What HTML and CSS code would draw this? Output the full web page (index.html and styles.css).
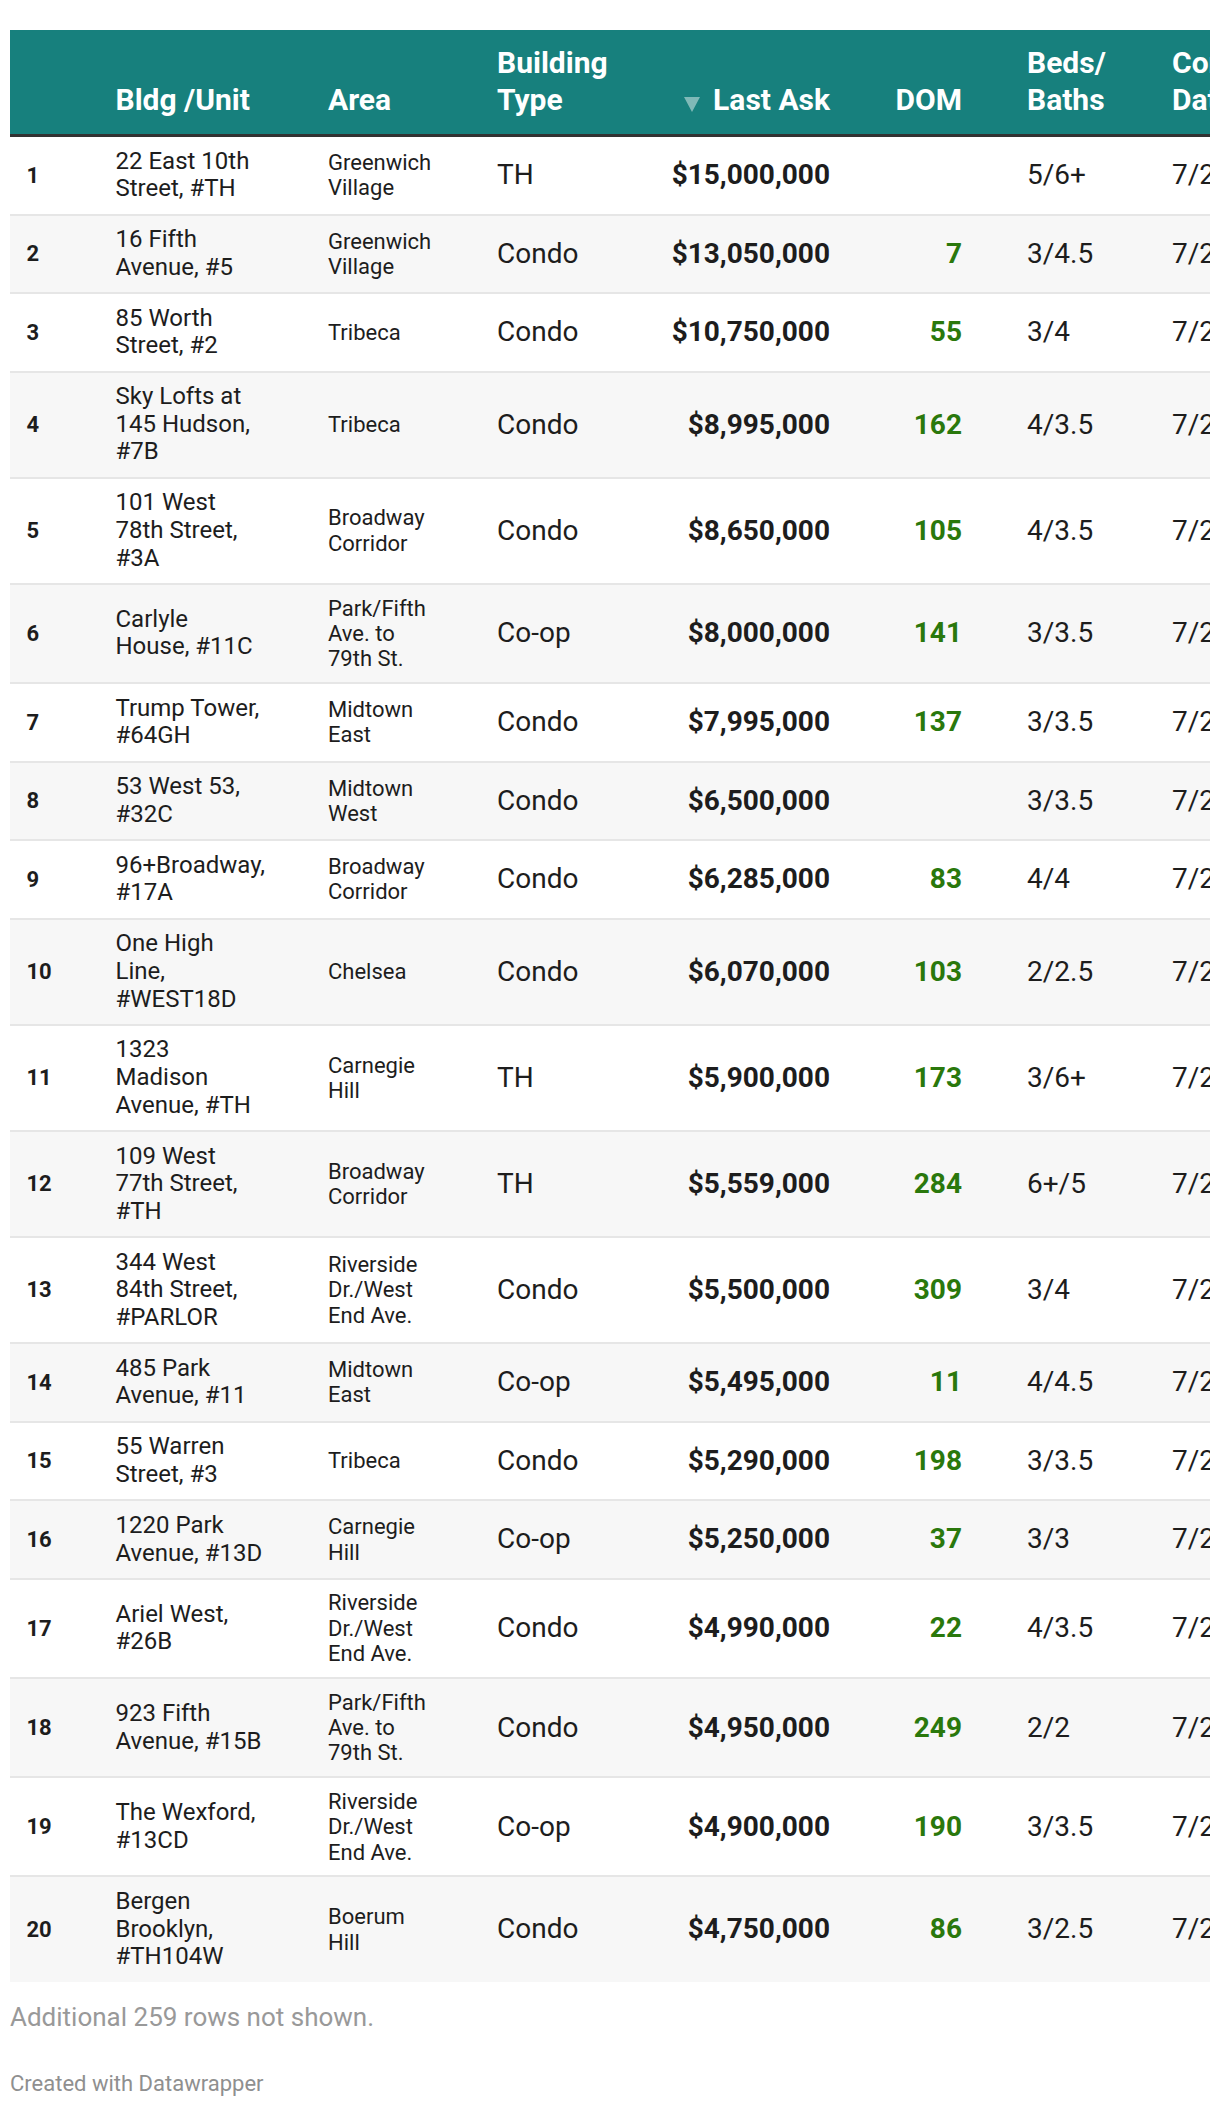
FILE: index.html
```html
<!DOCTYPE html>
<html lang="en">
<head>
<meta charset="utf-8">
<title>Listings</title>
<link rel="stylesheet" href="styles.css">
</head>
<body>
<div class="chart">
  <div class="table-scroll">
    <table class="data">
      <thead>
        <tr>
          <th class="c-rank"></th>
          <th class="c-bldg">Bldg /Unit</th>
          <th class="c-area">Area</th>
          <th class="c-type">Building Type</th>
          <th class="c-ask num"><span class="sort"><svg width="16" height="15" viewBox="0 0 16 15"><polygon points="0,0 16,0 8,15"/></svg></span>Last Ask</th>
          <th class="c-dom num">DOM</th>
          <th class="c-beds">Beds/ Baths</th>
          <th class="c-date">Contract Date</th>
        </tr>
      </thead>
      <tbody>
        <tr><td class="rank">1</td><td class="bldg">22 East 10th Street, #TH</td><td class="area">Greenwich Village</td><td class="type">TH</td><td class="ask">$15,000,000</td><td class="dom"></td><td class="beds">5/6+</td><td class="date">7/25/2023</td></tr>
        <tr><td class="rank">2</td><td class="bldg">16 Fifth Avenue, #5</td><td class="area">Greenwich Village</td><td class="type">Condo</td><td class="ask">$13,050,000</td><td class="dom">7</td><td class="beds">3/4.5</td><td class="date">7/24/2023</td></tr>
        <tr><td class="rank">3</td><td class="bldg">85 Worth Street, #2</td><td class="area">Tribeca</td><td class="type">Condo</td><td class="ask">$10,750,000</td><td class="dom">55</td><td class="beds">3/4</td><td class="date">7/24/2023</td></tr>
        <tr><td class="rank">4</td><td class="bldg">Sky Lofts at 145 Hudson, #7B</td><td class="area">Tribeca</td><td class="type">Condo</td><td class="ask">$8,995,000</td><td class="dom">162</td><td class="beds">4/3.5</td><td class="date">7/25/2023</td></tr>
        <tr><td class="rank">5</td><td class="bldg">101 West 78th Street, #3A</td><td class="area">Broadway Corridor</td><td class="type">Condo</td><td class="ask">$8,650,000</td><td class="dom">105</td><td class="beds">4/3.5</td><td class="date">7/24/2023</td></tr>
        <tr><td class="rank">6</td><td class="bldg">Carlyle House, #11C</td><td class="area">Park/Fifth Ave. to 79th St.</td><td class="type">Co-op</td><td class="ask">$8,000,000</td><td class="dom">141</td><td class="beds">3/3.5</td><td class="date">7/26/2023</td></tr>
        <tr><td class="rank">7</td><td class="bldg">Trump Tower, #64GH</td><td class="area">Midtown East</td><td class="type">Condo</td><td class="ask">$7,995,000</td><td class="dom">137</td><td class="beds">3/3.5</td><td class="date">7/24/2023</td></tr>
        <tr><td class="rank">8</td><td class="bldg">53 West 53, #32C</td><td class="area">Midtown West</td><td class="type">Condo</td><td class="ask">$6,500,000</td><td class="dom"></td><td class="beds">3/3.5</td><td class="date">7/27/2023</td></tr>
        <tr><td class="rank">9</td><td class="bldg">96+Broadway, #17A</td><td class="area">Broadway Corridor</td><td class="type">Condo</td><td class="ask">$6,285,000</td><td class="dom">83</td><td class="beds">4/4</td><td class="date">7/25/2023</td></tr>
        <tr><td class="rank">10</td><td class="bldg">One High Line, #WEST18D</td><td class="area">Chelsea</td><td class="type">Condo</td><td class="ask">$6,070,000</td><td class="dom">103</td><td class="beds">2/2.5</td><td class="date">7/24/2023</td></tr>
        <tr><td class="rank">11</td><td class="bldg">1323 Madison Avenue, #TH</td><td class="area">Carnegie Hill</td><td class="type">TH</td><td class="ask">$5,900,000</td><td class="dom">173</td><td class="beds">3/6+</td><td class="date">7/26/2023</td></tr>
        <tr><td class="rank">12</td><td class="bldg">109 West 77th Street, #TH</td><td class="area">Broadway Corridor</td><td class="type">TH</td><td class="ask">$5,559,000</td><td class="dom">284</td><td class="beds">6+/5</td><td class="date">7/25/2023</td></tr>
        <tr><td class="rank">13</td><td class="bldg">344 West 84th Street, #PARLOR</td><td class="area">Riverside Dr./West End Ave.</td><td class="type">Condo</td><td class="ask">$5,500,000</td><td class="dom">309</td><td class="beds">3/4</td><td class="date">7/24/2023</td></tr>
        <tr><td class="rank">14</td><td class="bldg">485 Park Avenue, #11</td><td class="area">Midtown East</td><td class="type">Co-op</td><td class="ask">$5,495,000</td><td class="dom">11</td><td class="beds">4/4.5</td><td class="date">7/27/2023</td></tr>
        <tr><td class="rank">15</td><td class="bldg">55 Warren Street, #3</td><td class="area">Tribeca</td><td class="type">Condo</td><td class="ask">$5,290,000</td><td class="dom">198</td><td class="beds">3/3.5</td><td class="date">7/24/2023</td></tr>
        <tr><td class="rank">16</td><td class="bldg">1220 Park Avenue, #13D</td><td class="area">Carnegie Hill</td><td class="type">Co-op</td><td class="ask">$5,250,000</td><td class="dom">37</td><td class="beds">3/3</td><td class="date">7/25/2023</td></tr>
        <tr><td class="rank">17</td><td class="bldg">Ariel West, #26B</td><td class="area">Riverside Dr./West End Ave.</td><td class="type">Condo</td><td class="ask">$4,990,000</td><td class="dom">22</td><td class="beds">4/3.5</td><td class="date">7/26/2023</td></tr>
        <tr><td class="rank">18</td><td class="bldg">923 Fifth Avenue, #15B</td><td class="area">Park/Fifth Ave. to 79th St.</td><td class="type">Condo</td><td class="ask">$4,950,000</td><td class="dom">249</td><td class="beds">2/2</td><td class="date">7/24/2023</td></tr>
        <tr><td class="rank">19</td><td class="bldg">The Wexford, #13CD</td><td class="area">Riverside Dr./West End Ave.</td><td class="type">Co-op</td><td class="ask">$4,900,000</td><td class="dom">190</td><td class="beds">3/3.5</td><td class="date">7/25/2023</td></tr>
        <tr><td class="rank">20</td><td class="bldg">Bergen Brooklyn, #TH104W</td><td class="area">Boerum Hill</td><td class="type">Condo</td><td class="ask">$4,750,000</td><td class="dom">86</td><td class="beds">3/2.5</td><td class="date">7/27/2023</td></tr>
      </tbody>
    </table>
  </div>
  <p class="notes">Additional 259 rows not shown.</p>
  <p class="credit">Created with Datawrapper</p>
</div>
</body>
</html>
```

FILE: styles.css
```css
html, body {
  margin: 0;
  padding: 0;
  background: #ffffff;
}

body {
  font-family: Roboto, "Liberation Sans", Arial, sans-serif;
  color: #1d1d1d;
}

.chart {
  padding: 30px 10px 0 10px;
}

.table-scroll {
  width: 1200px;
  overflow: hidden;
}

.data {
  table-layout: fixed;
  width: 1312px;
  border-collapse: separate;
  border-spacing: 0;
}

.data th,
.data td {
  box-sizing: border-box;
  padding: 0;
  text-align: left;
  white-space: normal;
}

/* header */
.data thead th {
  background: #17807d;
  color: #ffffff;
  font-size: 30px;
  font-weight: 700;
  line-height: 36.5px;
  vertical-align: bottom;
  padding-top: 15px;
  padding-bottom: 16px;
  border-bottom: 3px solid #323232;
}

.c-rank { width: 105.5px; padding-left: 16.5px !important; }
.c-bldg { width: 212.5px; padding-right: 64.5px !important; }
.c-area { width: 169px; padding-right: 60px !important; }
.c-type { width: 143px; }
.c-ask  { width: 190px; }
.c-dom  { width: 132px; }
.c-beds { width: 210px; padding-left: 65px !important; }
.c-date { width: 150px; }

.data thead th.num {
  text-align: right;
}

.sort {
  display: inline-block;
  margin-right: 13.5px;
  vertical-align: baseline;
}

.sort svg {
  display: block;
  fill: rgba(255, 255, 255, 0.45);
  position: relative;
  top: 2px;
}

/* body */
.data tbody td {
  padding-top: 10.68px;
  padding-bottom: 10.68px;
  vertical-align: middle;
  border-bottom: 2px solid #e6e6e6;
  line-height: 1.15;
}

.data tbody tr:nth-child(even) td {
  background: #f7f7f7;
}

.data tbody tr:last-child td {
  border-bottom: 0;
}

.rank {
  padding-left: 16.5px !important;
  font-size: 22px;
  font-weight: 700;
}

.bldg {
  font-size: 24px;
  padding-right: 64.5px !important;
}

.area {
  font-size: 22px;
  padding-right: 60px !important;
}

.type {
  font-size: 28px;
}

.ask {
  font-size: 28px;
  font-weight: 700;
  text-align: right !important;
}

.dom {
  font-size: 28px;
  font-weight: 700;
  color: #2a780c;
  text-align: right !important;
}

.beds {
  font-size: 28px;
  padding-left: 65px !important;
}

.date {
  font-size: 28px;
  white-space: nowrap !important;
}

/* footer */
.notes {
  margin: 20px 0 0 0;
  font-size: 26px;
  line-height: 30px;
  color: #999999;
}

.credit {
  margin: 39px 0 0 0;
  font-size: 22px;
  line-height: 26.4px;
  color: #8f8f8f;
}
```
